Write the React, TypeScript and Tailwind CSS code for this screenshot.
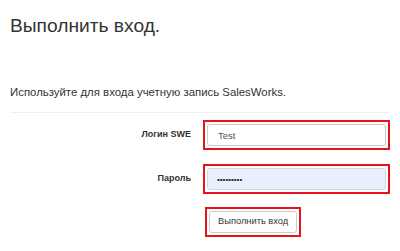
import React from "react";

export default function App() {
  return (
    <div
      className="w-[400px] h-[251px] bg-white overflow-hidden text-[#333] px-[10px]"
      style={{ fontFamily: '"Liberation Sans", Arial, sans-serif' }}
    >
      <h1 className="pt-[15px] text-[19.2px] leading-[22px] font-normal">Выполнить вход.</h1>
      <p className="mt-[47px] text-[11.4px] leading-[17px]">
        Используйте для входа учетную запись SalesWorks.
      </p>
      <div className="mt-[11px] h-px bg-[#eeeeee]" />
      <div className="mt-[7px] flex flex-col gap-[14px]">
        <div className="flex items-center">
          <label className="w-[182px] text-right text-[9px] font-bold">Логин SWE</label>
          <div className="ml-[12px] w-[188px] border-2 border-[#e8121c] p-[2px]">
            <input
              readOnly
              value="Test"
              className="block w-full h-[22px] border border-[#cccccc] rounded-[3px] bg-white px-[10px] text-[9.5px] text-[#555] outline-none"
            />
          </div>
        </div>
        <div className="flex items-center">
          <label className="w-[182px] text-right text-[9px] font-bold">Пароль</label>
          <div className="ml-[12px] w-[188px] border-2 border-[#e8121c] p-[2px]">
            <input
              readOnly
              type="password"
              value="password1"
              className="block w-full h-[22px] border border-[#cfd6e0] rounded-[3px] bg-[#e8f0fe] px-[9px] text-[8px] text-[#222] outline-none"
            />
          </div>
        </div>
      </div>
      <div className="mt-[13px] flex">
        <div className="ml-[195px] border-2 border-[#e8121c] p-[2px]">
          <button className="block h-[22px] border border-[#cccccc] rounded-[3px] bg-white px-[8px] text-[9.3px] text-[#333]">
            Выполнить вход
          </button>
        </div>
      </div>
    </div>
  );
}
